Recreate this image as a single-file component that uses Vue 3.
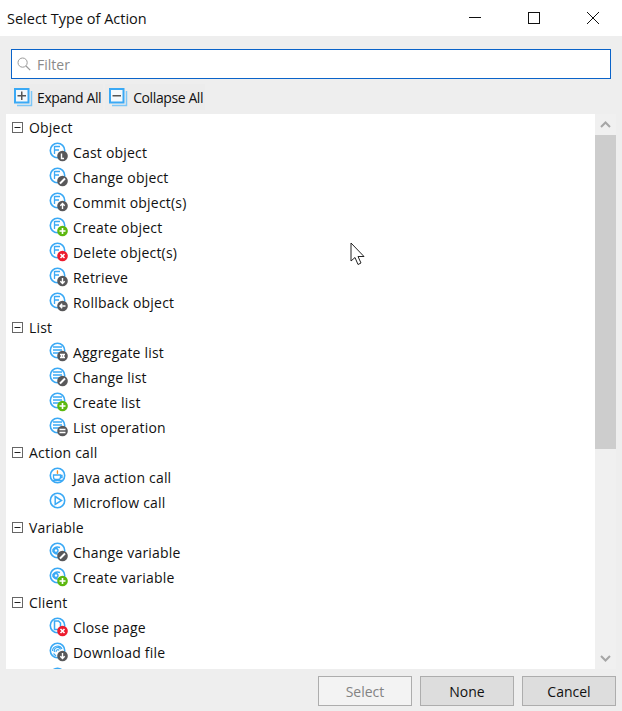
<script setup>
const groups = [
  { name: 'Object', items: [
    ['Cast object', 'entity', 'cast'], ['Change object', 'entity', 'edit'], ['Commit object(s)', 'entity', 'up'],
    ['Create object', 'entity', 'plus'], ['Delete object(s)', 'entity', 'x'], ['Retrieve', 'entity', 'down'], ['Rollback object', 'entity', 'left'] ] },
  { name: 'List', items: [
    ['Aggregate list', 'list', 'agg'], ['Change list', 'list', 'edit'], ['Create list', 'list', 'plus'], ['List operation', 'list', 'eq'] ] },
  { name: 'Action call', items: [ ['Java action call', 'java', ''], ['Microflow call', 'play', ''] ] },
  { name: 'Variable', items: [ ['Change variable', 'var', 'edit'], ['Create variable', 'var', 'plus'] ] },
  { name: 'Client', items: [ ['Close page', 'page', 'x'], ['Download file', 'file', 'down'], ['', 'page', ''] ] },
]
const badgeColor = { plus: '#5cb80f', x: '#ed1c2e' }
</script>

<template>
  <div class="dialog">
    <header class="titlebar">
      <span class="title">Select Type of Action</span>
      <div class="winctl">
        <svg width="14" height="14" viewBox="0 0 14 14"><path d="M1 6.500H13" stroke="#111" fill="none"/></svg>
        <svg width="14" height="14" viewBox="0 0 14 14"><rect x="1.500" y="1.500" width="11" height="11" stroke="#111" fill="none"/></svg>
        <svg width="14" height="14" viewBox="0 0 14 14"><path d="M1 1L13 13M13 1L1 13" stroke="#111" fill="none"/></svg>
      </div>
    </header>

    <div class="filter">
      <svg class="search" width="14" height="14" viewBox="0 0 14 14"><circle cx="5.600" cy="5.600" r="4.600" fill="none" stroke="#9a9a9a"/><path d="M9 9L13.200 13.200" stroke="#9a9a9a" stroke-width="1.200"/></svg>
      <span class="placeholder">Filter</span>
    </div>

    <div class="toolbar">
      <button class="tool">
        <svg width="19" height="19" viewBox="0 0 19 19"><path d="M3 17.500H17.500V3" fill="none" stroke="#7cc6f7" stroke-width="1.500"/><rect x="1" y="1" width="13.500" height="13.500" fill="#f4f8fb" stroke="#3aa9f5" stroke-width="2"/><path d="M3.500 7.750H12M7.750 3.500V12" stroke="#555" stroke-width="1.500"/></svg>
        <span>Expand All</span>
      </button>
      <button class="tool">
        <svg width="19" height="19" viewBox="0 0 19 19"><path d="M3 17.500H17.500V3" fill="none" stroke="#7cc6f7" stroke-width="1.500"/><rect x="1" y="1" width="13.500" height="13.500" fill="#f4f8fb" stroke="#3aa9f5" stroke-width="2"/><path d="M3.500 7.750H12" stroke="#555" stroke-width="1.500"/></svg>
        <span>Collapse All</span>
      </button>
    </div>

    <div class="panel">
      <div class="tree">
        <section v-for="g in groups" :key="g.name">
          <div class="row group">
            <svg class="exp" width="11" height="11" viewBox="0 0 11 11"><rect x="0.500" y="0.500" width="10" height="10" fill="#fff" stroke="#666"/><path d="M2.500 5.500H8.500" stroke="#222"/></svg>
            <span>{{ g.name }}</span>
          </div>
          <div v-for="it in g.items" :key="it[0] || 'more'" class="row item">
            <svg class="icon" width="20" height="20" viewBox="0 0 20 20">
              <circle cx="8.500" cy="8.500" r="7.200" fill="#fff" stroke="#3aa9f5" stroke-width="1.600"/>
              <g fill="none" stroke="#3aa9f5" stroke-width="1.300">
                <path v-if="it[1] === 'entity'" d="M5.500 4.500H11M5.500 3.900V12M5.500 8H10"/>
                <path v-else-if="it[1] === 'list'" stroke-width="1.500" d="M4 5H13M4 8H13M4 11H13"/>
                <path v-else-if="it[1] === 'java'" d="M4.500 8H11.500V10A2.500 2.500 0 0 1 9 12.500H7A2.500 2.500 0 0 1 4.500 10ZM11.500 8.500H13V10.500H11.500M4 13.500H13"/>
                <path v-else-if="it[1] === 'play'" stroke-width="1.500" d="M6.200 4.500L12.500 8.500L6.200 12.500Z"/>
                <path v-else-if="it[1] === 'var'" stroke-width="1.500" d="M3.500 8.500C5 5.500 8 4.500 11 5.500M3.500 8.500C5 11.500 8 12.500 11 11.500M9 8.500A2 2 0 1 1 9 8.490"/>
                <path v-else-if="it[1] === 'page'" stroke-width="1.500" d="M5.500 4H9.500L11.500 6V12.500H5.500Z"/>
                <path v-else stroke-width="1.200" d="M3.500 9A5 5 0 0 1 13 7M5.500 10A3.200 3.200 0 0 1 11.500 7.500M7.300 10A1.500 1.500 0 0 1 10 8.500M4.500 11.500L7 14"/>
              </g>
              <path v-if="it[1] === 'java'" d="M8 3.500C9.500 4.500 7.500 5.500 8.800 6.800" fill="none" stroke="#f08c1e" stroke-width="1.400"/>
              <g v-if="it[2]">
                <circle cx="13.500" cy="14" r="5.300" :fill="badgeColor[it[2]] || '#58585a'"/>
                <g fill="none" stroke="#fff" stroke-width="1.400">
                  <path v-if="it[2] === 'cast'" d="M12.500 11.500V16.500H15"/>
                  <path v-else-if="it[2] === 'edit'" stroke-width="2" d="M11 16.500L16 11.500"/>
                  <path v-else-if="it[2] === 'up'" d="M13.500 17V11.500M11.300 13.700L13.500 11.500L15.700 13.700"/>
                  <path v-else-if="it[2] === 'down'" d="M13.500 11V16.500M11.300 14.300L13.500 16.500L15.700 14.300"/>
                  <path v-else-if="it[2] === 'left'" d="M16.500 14H11M13.200 11.800L11 14L13.200 16.200"/>
                  <path v-else-if="it[2] === 'plus'" stroke-width="1.600" d="M10.500 14H16.500M13.500 11V17"/>
                  <path v-else-if="it[2] === 'x'" stroke-width="1.600" d="M11.500 12L15.500 16M15.500 12L11.500 16"/>
                  <path v-else-if="it[2] === 'agg'" d="M11 12.500H16M11 15.500H16M12.500 12.500V15.500M14.500 12.500V15.500"/>
                  <path v-else d="M10.500 12.500H16.500M10.500 15.500H16.500"/>
                </g>
              </g>
            </svg>
            <span v-if="it[0]">{{ it[0] }}</span>
          </div>
        </section>
      </div>
      <div class="scrollbar">
        <svg class="arrow" width="21" height="21" viewBox="0 0 21 21"><path d="M6 13L10.500 8.500L15 13" fill="none" stroke="#a6a6a6" stroke-width="2"/></svg>
        <div class="track"><div class="thumb"></div></div>
        <svg class="arrow" width="21" height="21" viewBox="0 0 21 21"><path d="M6 8L10.500 12.500L15 8" fill="none" stroke="#a6a6a6" stroke-width="2"/></svg>
      </div>
    </div>

    <footer class="footer">
      <button class="btn disabled">Select</button>
      <button class="btn">None</button>
      <button class="btn">Cancel</button>
    </footer>

    <svg class="cursor" width="16" height="26" viewBox="0 0 16 26"><path d="M1 1V19L5 15.500L8 22.500L11 21L8 14.500H14Z" fill="#fff" stroke="#222" stroke-width="1"/></svg>
  </div>
</template>

<style scoped>
.dialog {
  position: relative;
  width: 622px;
  height: 711px;
  background: #eeeeee;
  display: flex;
  flex-direction: column;
  overflow: hidden;
  font-family: "Open Sans", "Noto Sans", sans-serif;
  font-size: 14px;
  color: #111;
}
.titlebar {
  height: 36px;
  flex: none;
  background: #fff;
  display: flex;
  align-items: center;
  justify-content: space-between;
  padding-left: 7px;
  font-size: 14.500px;
}
.winctl {
  display: flex;
  gap: 45px;
  padding-right: 22px;
  margin-top: -1px;
}
.filter {
  flex: none;
  height: 30px;
  margin: 13px 11px 0;
  box-sizing: border-box;
  background: #fff;
  border: 1px solid #0a63c9;
  display: flex;
  align-items: center;
  padding-left: 5px;
  gap: 6px;
}
.placeholder { color: #8a8a8a; }
.toolbar {
  flex: none;
  height: 35px;
  display: flex;
  padding-left: 10px;
  gap: 2px;
  align-items: flex-start;
  padding-top: 5px;
  box-sizing: border-box;
}
.tool {
  font: inherit;
  letter-spacing: -0.4px;
  color: inherit;
  background: #ececec;
  border: none;
  display: flex;
  align-items: center;
  gap: 4px;
  height: 26px;
  padding: 0 2px 0 4px;
  white-space: nowrap;
}
.tool + .tool { gap: 5px; }
.panel {
  flex: none;
  height: 555px;
  margin-left: 6px;
  margin-right: 6px;
  display: flex;
}
.tree {
  flex: 1;
  background: #fff;
  overflow: hidden;
  padding-top: 1px;
  letter-spacing: 0.2px;
}
.row {
  height: 25px;
  display: flex;
  align-items: center;
  white-space: nowrap;
}
.group { padding-left: 6px; gap: 6px; }
.item { padding-left: 43px; gap: 4px; }
.icon { flex: none; margin-top: -2px; }
.scrollbar {
  width: 21px;
  flex: none;
  display: flex;
  flex-direction: column;
  background: #f0f0f0;
}
.arrow { flex: none; }
.track { flex: 1; }
.thumb { height: 314px; background: #cdcdcd; }
.footer {
  flex: 1;
  display: flex;
  justify-content: flex-end;
  align-items: flex-start;
  gap: 8px;
  padding: 7px 6px 0 0;
}
.btn {
  width: 94px;
  height: 30px;
  font: inherit;
  color: #111;
  background: #dddddd;
  border: 1px solid #adadad;
}
.btn.disabled {
  background: #f3f3f3;
  color: #838383;
}
.cursor {
  position: absolute;
  left: 350px;
  top: 242px;
}
</style>
